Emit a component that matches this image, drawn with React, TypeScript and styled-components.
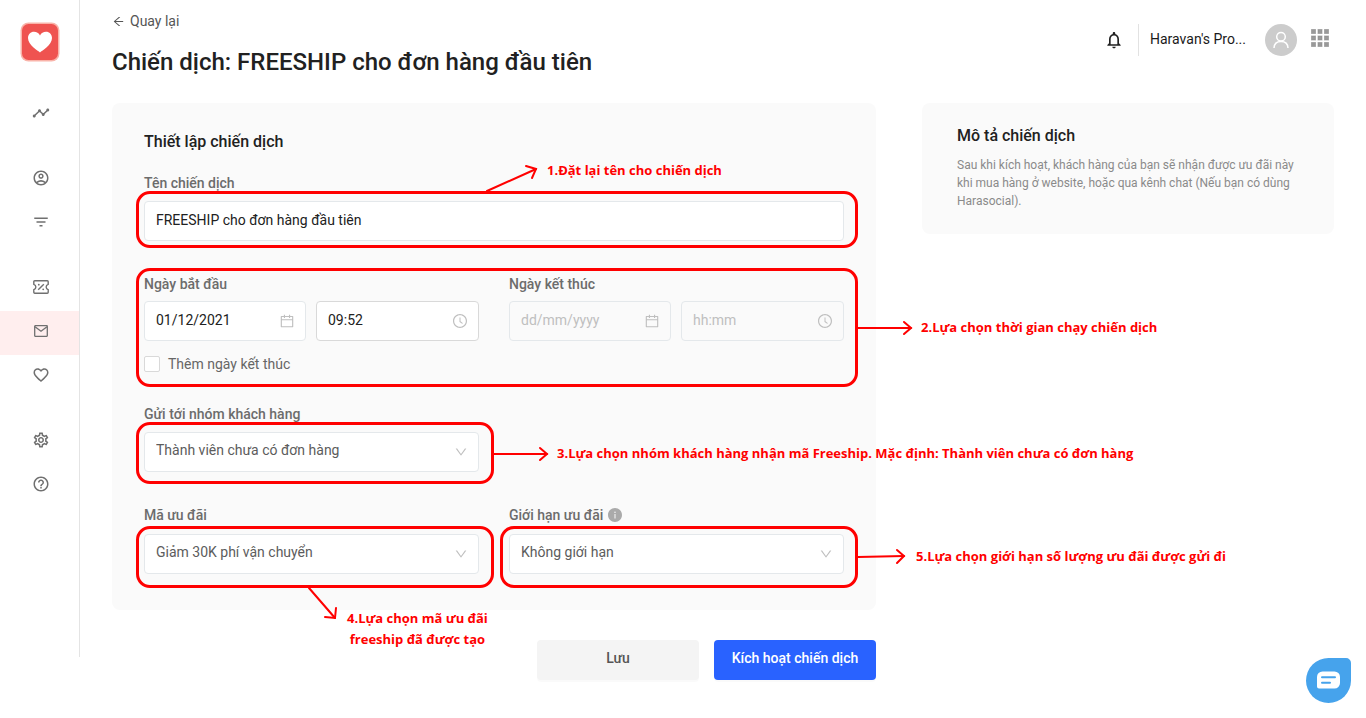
import React from 'react';
import styled, { createGlobalStyle } from 'styled-components';
import {
  MdTimeline,
  MdOutlineAccountCircle,
  MdFilterList,
  MdFavoriteBorder,
  MdOutlineSettings,
  MdHelpOutline,
  MdNotificationsNone,
} from 'react-icons/md';
import {
  AiOutlineArrowLeft,
  AiOutlineCalendar,
  AiOutlineClockCircle,
  AiOutlineDown,
  AiFillInfoCircle,
} from 'react-icons/ai';

const GlobalStyle = createGlobalStyle`
  *, *::before, *::after { box-sizing: border-box; }
  body {
    margin: 0;
    background: #fff;
    color: #212121;
    font-family: Roboto, "Noto Sans", sans-serif;
    font-size: 14px;
    line-height: 22px;
    overflow-x: hidden;
  }
  input, select, button { font: inherit; color: inherit; }
`;

const Page = styled.div`
  display: flex;
  align-items: flex-start;
`;

/* ---------- Sidebar ---------- */

const Sidebar = styled.nav`
  flex: 0 0 80px;
  display: flex;
  flex-direction: column;
  align-items: stretch;
  min-height: calc(100vh - 61px);
  padding-top: 22px;
  border-right: 1px solid #e4e4e4;
`;

const Logo = styled.a`
  align-self: center;
  display: block;
  height: 40px;
  margin-bottom: 10px;
  svg { display: block; }
`;

const NavGroup = styled.div`
  display: flex;
  flex-direction: column;
  margin-top: 21px;
`;

const NavItem = styled.a<{ $active?: boolean }>`
  display: flex;
  align-items: center;
  justify-content: center;
  height: 44px;
  padding: 0 0 4px 2px;
  color: #707070;
  background: ${({ $active }) => ($active ? '#ffeeee' : 'transparent')};
  svg { display: block; }
`;

/* ---------- Header ---------- */

const Main = styled.main`
  flex: 1;
  min-width: 0;
  padding: 10px 32px 24px;
`;

const Header = styled.header`
  display: flex;
  justify-content: space-between;
  align-items: flex-start;
  padding-bottom: 25px;
`;

const BackLink = styled.a`
  display: flex;
  align-items: center;
  gap: 5px;
  width: fit-content;
  color: #555;
  text-decoration: none;
`;

const PageTitle = styled.h1`
  margin: 14px 0 0;
  font-size: 24px;
  line-height: 32px;
  font-weight: 500;
`;

const UserBar = styled.div`
  display: flex;
  align-items: center;
  height: 32px;
  margin: 14px 5px 0 0;
`;

const IconButton = styled.button<{ $raised?: boolean }>`
  display: flex;
  padding: ${({ $raised }) => ($raised ? '0 0 4px' : '0')};
  border: 0;
  background: none;
  cursor: pointer;
`;

const ShopName = styled.span`
  width: 115px;
  height: 32px;
  margin-left: 14px;
  padding-left: 11px;
  border-left: 1px solid #e2e2e2;
  line-height: 30px;
  white-space: nowrap;
  color: #1a1a1a;
`;

const Avatar = styled.span`
  display: flex;
  align-items: center;
  justify-content: center;
  width: 32px;
  height: 32px;
  margin: 0 14px 0 12px;
  border-radius: 50%;
  background: #ccc;
`;

/* ---------- Cards ---------- */

const Columns = styled.div`
  display: grid;
  grid-template-columns: 764fr 412fr;
  column-gap: 46px;
  align-items: start;
`;

const FormCard = styled.section`
  padding: 28px 32px 36px;
  border-radius: 8px;
  background: #fafafa;
`;

const InfoCard = styled.section`
  padding: 22px 35px 24px;
  border-radius: 8px;
  background: #fafafa;
`;

const CardTitle = styled.h2`
  margin: 0;
  font-size: 16px;
  line-height: 22px;
  font-weight: 500;
`;

const InfoText = styled.p`
  margin: 9px 0 0;
  font-size: 12px;
  line-height: 18px;
  color: #8a8a8a;
`;

const Row = styled.div<{ $top: number }>`
  position: relative;
  display: grid;
  grid-template-columns: 1fr 1fr;
  column-gap: 30px;
  margin-top: ${({ $top }) => $top}px;
`;

const Field = styled.div<{ $wide?: boolean; $gap?: number }>`
  display: flex;
  flex-direction: column;
  gap: ${({ $gap = 7 }) => $gap}px;
  grid-column: ${({ $wide }) => ($wide ? '1 / -1' : 'auto')};
`;

const Label = styled.label`
  display: flex;
  align-items: center;
  gap: 4px;
  font-weight: 500;
  color: #6c6c6c;
`;

const Pair = styled.div`
  display: grid;
  grid-template-columns: 162fr 163fr;
  gap: 10px;
`;

const Control = styled.div`
  position: relative;
  display: flex;
`;

const TextInput = styled.input<{ $strong?: boolean }>`
  width: 100%;
  height: 40px;
  padding: 0 11px 2px;
  border: 1px solid ${({ $strong }) => ($strong ? '#d9d9d9' : '#e4e8eb')};
  border-radius: 4px;
  background: #fff;
  color: #212121;
  outline: none;
  &:disabled { background: transparent; }
  &::placeholder { color: #bfbfbf; opacity: 1; }
`;

const Select = styled.select`
  width: 100%;
  height: 40px;
  padding: 0 32px 4px 11px;
  border: 1px solid #e4e8eb;
  border-radius: 4px;
  background: #fff;
  color: #5c5c5c;
  appearance: none;
  outline: none;
`;

const Suffix = styled.span`
  position: absolute;
  inset: 0 11px 0 auto;
  display: flex;
  align-items: center;
  color: #bfbfbf;
  pointer-events: none;
`;

const CheckRow = styled.label`
  grid-column: 1 / -1;
  display: flex;
  align-items: center;
  gap: 8px;
  margin-top: 12px;
  color: #666;
`;

const Checkbox = styled.input`
  width: 16px;
  height: 16px;
  margin: 0;
  appearance: none;
  border: 1px solid #d9d9d9;
  border-radius: 2px;
  background: #fff;
  &:checked { background: #2962ff; border-color: #2962ff; }
`;

const Actions = styled.div`
  display: flex;
  justify-content: flex-end;
  gap: 15px;
  margin-top: 30px;
`;

const Button = styled.button<{ $primary?: boolean }>`
  width: 162px;
  height: 40px;
  padding: 0 0 4px;
  border: 0;
  border-radius: 4px;
  box-shadow: 0 2px 0 rgba(0, 0, 0, 0.02);
  background: ${({ $primary }) => ($primary ? '#2962ff' : '#f4f4f4')};
  color: ${({ $primary }) => ($primary ? '#fff' : '#555')};
  font-weight: 500;
  cursor: pointer;
`;

/* ---------- Tutorial call-outs drawn over the form ---------- */

const Highlight = styled.div<{ $inset: string }>`
  position: absolute;
  inset: ${({ $inset }) => $inset};
  border: 3px solid #f00;
  border-radius: 14px;
  pointer-events: none;
`;

const Callout = styled.div<{ $left: string; $top: string; $align?: string }>`
  position: absolute;
  z-index: 2;
  left: ${({ $left }) => $left};
  top: ${({ $top }) => $top};
  display: flex;
  align-items: ${({ $align }) => $align || 'center'};
  gap: 9px;
  pointer-events: none;
  svg { flex: none; display: block; overflow: visible; }
`;

const Note = styled.p`
  margin: 0;
  font-family: "Open Sans", "Noto Sans", sans-serif;
  font-size: 13px;
  line-height: 21px;
  font-weight: 700;
  color: #f00;
  text-align: center;
  white-space: nowrap;
`;

const ChatButton = styled.button`
  position: fixed;
  right: 15px;
  bottom: 15px;
  display: flex;
  align-items: center;
  justify-content: center;
  width: 45px;
  height: 45px;
  padding: 0 0 2px;
  border: 0;
  border-radius: 50% 5px 50% 50%;
  background: #46a3ec;
  cursor: pointer;
`;

/* ---------- Drawings ---------- */

const BrandMark = () => (
  <svg width="40" height="40" viewBox="0 0 40 40" aria-hidden="true">
    <rect x="0.5" y="0.5" width="39" height="39" rx="8" fill="#f9b3a9" />
    <rect x="2" y="2" width="36" height="36" rx="6.5" fill="#ef5350" />
    <path
      fill="#fff"
      d="M20 30.5C18 28.5 8 23 8 16c0-3.600 2.600-6.200 6-6.200 2.600 0 4.800 1.400 6 3.600 1.200-2.200 3.400-3.600 6-3.600 3.400 0 6 2.600 6 6.200 0 7-10 12.500-12 14.500z"
    />
  </svg>
);

const TicketIcon = () => (
  <svg width="16" height="14" viewBox="0 0 16 14" fill="none" stroke="currentColor" strokeWidth="1.4" aria-hidden="true">
    <path d="M1.700 .8h12.600a.9.900 0 0 1 .9.900v2.600a2.800 2.800 0 0 0 0 5.400v2.600a.9.900 0 0 1-.9.900H1.700a.9.900 0 0 1-.9-.9V9.700a2.800 2.800 0 0 0 0-5.400V1.700a.9.900 0 0 1 .9-.9z" />
    <path d="M10.800 4.200 5.200 9.800" />
    <circle cx="5.800" cy="4.700" r=".9" fill="currentColor" stroke="none" />
    <circle cx="10.200" cy="9.300" r=".9" fill="currentColor" stroke="none" />
  </svg>
);

const MailIcon = () => (
  <svg width="14" height="12" viewBox="0 0 14 12" fill="none" stroke="currentColor" strokeWidth="1.300" aria-hidden="true">
    <rect x=".7" y=".7" width="12.600" height="10.600" rx=".5" />
    <path d="M1 1.800 7 6.300l6-4.500" />
  </svg>
);

const PersonIcon = () => (
  <svg width="18" height="18" viewBox="0 0 18 18" fill="none" stroke="#fff" strokeWidth="1.500" aria-hidden="true">
    <circle cx="9" cy="5.800" r="4.300" />
    <path d="M2 17c.2-4 3-6.500 7-6.500s6.800 2.500 7 6.500" />
  </svg>
);

const AppsIcon = () => (
  <svg width="18" height="18" viewBox="0 0 18 18" aria-hidden="true">
    {[0, 1, 2].map((r) =>
      [0, 1, 2].map((c) => (
        <rect key={`${r}${c}`} x={c * 6.5 + 0.5} y={r * 6.5 + 0.5} width="4" height="4" fill="#999" stroke="#8c8c8c" strokeOpacity=".6" />
      ))
    )}
  </svg>
);

const ChatIcon = () => (
  <svg width="23" height="18" viewBox="0 0 23 18" aria-hidden="true">
    <path fill="#fff" d="M5.500.5h12A5.500 5.500 0 0 1 23 6v6a5.500 5.500 0 0 1-5.500 5.500H2A2 2 0 0 1 0 15.500V6A5.500 5.500 0 0 1 5.500.5z" />
    <path d="M5 6.300h13M5 11.700h8" stroke="#46a3ec" strokeWidth="2" strokeLinecap="round" />
  </svg>
);

const Arrow = ({ width, height, line, head }: { width: number; height: number; line: string; head: string }) => (
  <svg width={width} height={height} viewBox={`0 0 ${width} ${height}`} fill="none" stroke="#f00" strokeWidth="2" strokeLinecap="round" aria-hidden="true">
    <path d={line} />
    <path d={head} />
  </svg>
);

type NavEntry = { label: string; icon: React.ReactNode; active?: boolean };

const nav: NavEntry[][] = [
  [{ label: 'Tổng quan', icon: <MdTimeline size={18} /> }],
  [
    { label: 'Khách hàng', icon: <MdOutlineAccountCircle size={18} /> },
    { label: 'Nhóm khách hàng', icon: <MdFilterList size={18} /> },
  ],
  [
    { label: 'Ưu đãi', icon: <TicketIcon /> },
    { label: 'Chiến dịch', icon: <MailIcon />, active: true },
    { label: 'Thành viên', icon: <MdFavoriteBorder size={18} /> },
  ],
  [
    { label: 'Cài đặt', icon: <MdOutlineSettings size={18} /> },
    { label: 'Trợ giúp', icon: <MdHelpOutline size={18} /> },
  ],
];

export default function App() {
  return (
    <>
      <GlobalStyle />
      <Page>
        <Sidebar>
          <Logo href="#" aria-label="Trang chủ">
            <BrandMark />
          </Logo>
          {nav.map((group, i) => (
            <NavGroup key={i}>
              {group.map((item) => (
                <NavItem key={item.label} href="#" aria-label={item.label} $active={item.active}>
                  {item.icon}
                </NavItem>
              ))}
            </NavGroup>
          ))}
        </Sidebar>

        <Main>
          <Header>
            <div>
              <BackLink href="#">
                <AiOutlineArrowLeft size={13} /> Quay lại
              </BackLink>
              <PageTitle>Chiến dịch: FREESHIP cho đơn hàng đầu tiên</PageTitle>
            </div>
            <UserBar>
              <IconButton type="button" aria-label="Thông báo">
                <MdNotificationsNone size={20} />
              </IconButton>
              <ShopName>Haravan's Pro...</ShopName>
              <Avatar>
                <PersonIcon />
              </Avatar>
              <IconButton type="button" aria-label="Ứng dụng" $raised>
                <AppsIcon />
              </IconButton>
            </UserBar>
          </Header>

          <Columns>
            <div>
              <FormCard>
                <CardTitle>Thiết lập chiến dịch</CardTitle>

                <Row $top={19}>
                  <Field $wide>
                    <Label htmlFor="name">Tên chiến dịch</Label>
                    <Control>
                      <TextInput id="name" defaultValue="FREESHIP cho đơn hàng đầu tiên" />
                      <Highlight $inset="-10px -14px -7px -8px" />
                      <Callout $left="342px" $top="-41px" $align="flex-start">
                        <Arrow width={52} height={31} line="M1 31 50 9" head="M40 6 50 9 46 18" />
                        <Note>1.Đặt lại tên cho chiến dịch</Note>
                      </Callout>
                    </Control>
                  </Field>
                </Row>

                <Row $top={32}>
                  <Field $gap={6}>
                    <Label htmlFor="start-date">Ngày bắt đầu</Label>
                    <Pair>
                      <Control>
                        <TextInput id="start-date" defaultValue="01/12/2021" />
                        <Suffix><AiOutlineCalendar size={16} /></Suffix>
                      </Control>
                      <Control>
                        <TextInput aria-label="Giờ bắt đầu" defaultValue="09:52" $strong />
                        <Suffix><AiOutlineClockCircle size={16} /></Suffix>
                      </Control>
                    </Pair>
                  </Field>
                  <Field $gap={6}>
                    <Label htmlFor="end-date">Ngày kết thúc</Label>
                    <Pair>
                      <Control>
                        <TextInput id="end-date" placeholder="dd/mm/yyyy" disabled />
                        <Suffix><AiOutlineCalendar size={16} /></Suffix>
                      </Control>
                      <Control>
                        <TextInput aria-label="Giờ kết thúc" placeholder="hh:mm" disabled />
                        <Suffix><AiOutlineClockCircle size={16} /></Suffix>
                      </Control>
                    </Pair>
                  </Field>
                  <CheckRow>
                    <Checkbox type="checkbox" />
                    Thêm ngày kết thúc
                  </CheckRow>
                  <Highlight $inset="-5px -14px -12px -8px" />
                  <Callout $left="calc(100% + 14px)" $top="44px">
                    <Arrow width={54} height={16} line="M0 8H53" head="M46 2 53 8 46 14" />
                    <Note>2.Lựa chọn thời gian chạy chiến dịch</Note>
                  </Callout>
                </Row>

                <Row $top={28}>
                  <Field>
                    <Label htmlFor="group">Gửi tới nhóm khách hàng</Label>
                    <Control>
                      <Select id="group">
                        <option>Thành viên chưa có đơn hàng</option>
                      </Select>
                      <Suffix><AiOutlineDown size={14} /></Suffix>
                      <Highlight $inset="-10px -15px -12px -8px" />
                      <Callout $left="calc(100% + 15px)" $top="11px">
                        <Arrow width={54} height={16} line="M0 8H53" head="M46 2 53 8 46 14" />
                        <Note>3.Lựa chọn nhóm khách hàng nhận mã Freeship. Mặc định: Thành viên chưa có đơn hàng</Note>
                      </Callout>
                    </Control>
                  </Field>
                </Row>

                <Row $top={32}>
                  <Field $gap={8}>
                    <Label htmlFor="code">Mã ưu đãi</Label>
                    <Control>
                      <Select id="code">
                        <option>Giảm 30K phí vận chuyển</option>
                      </Select>
                      <Suffix><AiOutlineDown size={14} /></Suffix>
                      <Highlight $inset="-8px -15px -14px -8px" />
                      <Callout $left="164px" $top="54px" $align="flex-end">
                        <Arrow width={30} height={62} line="M1 0 27 30" head="M28 20 27 30 17 29" />
                        <Note>
                          4.Lựa chọn mã ưu đãi
                          <br />
                          freeship đã được tạo
                        </Note>
                      </Callout>
                    </Control>
                  </Field>
                  <Field $gap={8}>
                    <Label htmlFor="limit">
                      Giới hạn ưu đãi <AiFillInfoCircle size={16} color="#aaa" />
                    </Label>
                    <Control>
                      <Select id="limit">
                        <option>Không giới hạn</option>
                      </Select>
                      <Suffix><AiOutlineDown size={14} /></Suffix>
                      <Highlight $inset="-8px -14px -14px -9px" />
                      <Callout $left="calc(100% + 14px)" $top="12px">
                        <Arrow width={49} height={16} line="M0 8 46 7" head="M39 1 46 7 39 14" />
                        <Note>5.Lựa chọn giới hạn số lượng ưu đãi được gửi đi</Note>
                      </Callout>
                    </Control>
                  </Field>
                </Row>
              </FormCard>

              <Actions>
                <Button type="button">Lưu</Button>
                <Button type="button" $primary>Kích hoạt chiến dịch</Button>
              </Actions>
            </div>

            <InfoCard>
              <CardTitle>Mô tả chiến dịch</CardTitle>
              <InfoText>
                Sau khi kích hoạt, khách hàng của bạn sẽ nhận được ưu đãi này khi mua hàng ở website,
                hoặc qua kênh chat (Nếu bạn có dùng Harasocial).
              </InfoText>
            </InfoCard>
          </Columns>
        </Main>
      </Page>

      <ChatButton type="button" aria-label="Trò chuyện">
        <ChatIcon />
      </ChatButton>
    </>
  );
}
